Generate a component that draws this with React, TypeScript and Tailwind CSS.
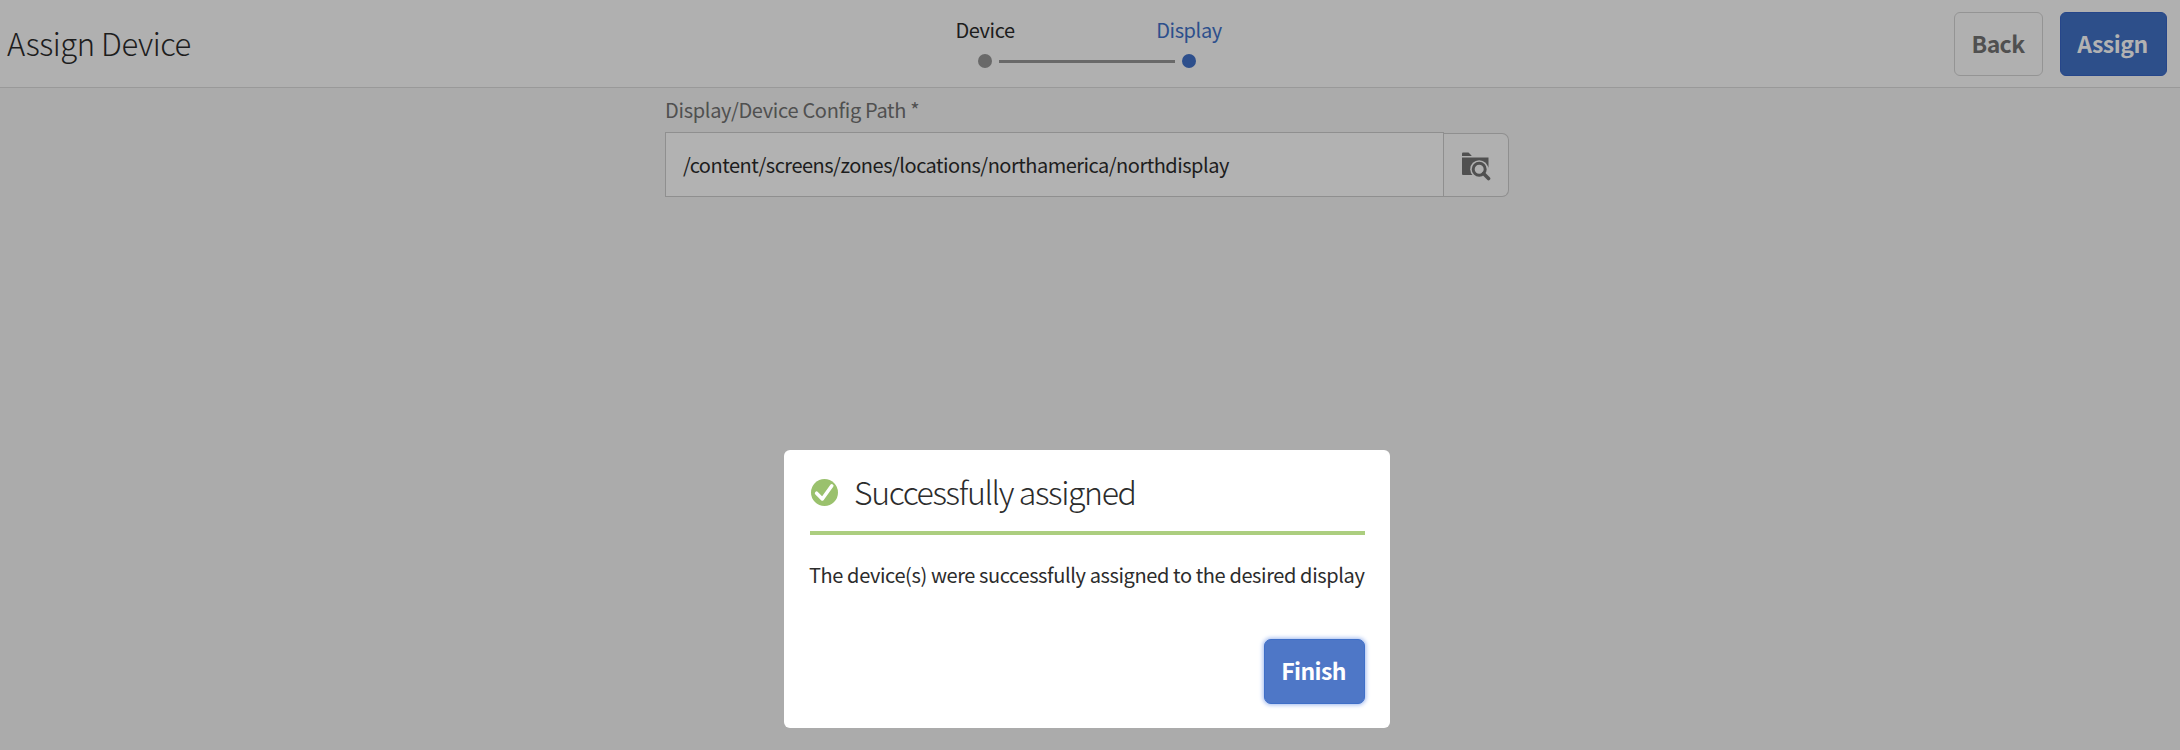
const font = "font-['Noto_Sans_CJK_SC','Noto_Sans',sans-serif]";

function FolderSearch() {
  return (
    <svg width="30" height="30" viewBox="0 0 30 30" fill="none">
      <path d="M1 1.5Q1 .5 2 .5H7.5L10.5 3.5V4H1Z" fill="#505050" />
      <path d="M1 5.5H27.5V23H2Q1 23 1 22Z" fill="#505050" />
      <circle cx="18.2" cy="17.2" r="9" fill="#b0b0b0" />
      <path d="M18 17L29 28V20L27.5 15L24 13Z" fill="#b0b0b0" />
      <circle cx="18.2" cy="17.2" r="6" stroke="#505050" strokeWidth="3" />
      <path d="M22.5 21.5L27.5 26.5" stroke="#505050" strokeWidth="3.6" strokeLinecap="round" />
    </svg>
  );
}

function SuccessIcon() {
  return (
    <svg width="27" height="27" viewBox="0 0 27 27" fill="none">
      <circle cx="13.5" cy="13.5" r="13.5" fill="#9ac16d" />
      <path d="M5.6 14.2L11.3 20L20.8 6.8" stroke="#fff" strokeWidth="3.5" strokeLinecap="round" strokeLinejoin="round" />
    </svg>
  );
}

function Step({ label, active }: { label: string; active?: boolean }) {
  return (
    <div className="flex w-[28px] flex-col items-center">
      <span className={`h-[30px] whitespace-nowrap text-[20px] leading-[30px] tracking-[-0.4px] ${active ? "text-[#2d4f8c]" : "text-[#1d1d1d]"}`}>
        {label}
      </span>
      <span className={`mt-[9px] size-[14px] rounded-full ${active ? "bg-[#2d4f8c]" : "bg-[#696969]"}`} />
    </div>
  );
}

export default function App() {
  return (
    <div className={`${font} flex h-[750px] w-[2180px] flex-col overflow-hidden bg-[#ababab]`}>
      <header className="flex h-[88px] shrink-0 items-start border-b border-[#999999] bg-[#b0b0b0]">
        <h1 className="w-[971px] pl-[7px] pt-[22px] text-[31px] font-light leading-[42px] tracking-[-0.45px] text-[#1d1d1d]">Assign Device</h1>
        <div className="flex pt-[15px]">
          <Step label="Device" />
          <div className="mt-[45px] h-[3px] w-[176px] bg-[#696969]" />
          <Step label="Display" active />
        </div>
        <div className="ml-auto flex gap-[17px] pr-[13px] pt-[12px]">
          <button className="h-[64px] w-[89px] whitespace-nowrap rounded-[6px] border border-[#949494] pb-[2px] pr-[1px] text-[23px] font-bold leading-none tracking-[-0.6px] text-[#505050]">Back</button>
          <button className="h-[64px] w-[107px] whitespace-nowrap rounded-[6px] border border-[#26468a] bg-[#2d4f8a] pb-[2px] pr-[2px] text-[23px] font-bold leading-none tracking-[-0.5px] text-[#b2b2b2]">Assign</button>
        </div>
      </header>
      <main className="flex flex-1 flex-col pl-[665px]">
        <label className="mt-[7px] h-[30px] text-[20px] leading-[30px] tracking-[-0.31px] text-[#505050]">Display/Device Config Path *</label>
        <div className="mt-[7px] flex">
          <div className="flex h-[65px] w-[779px] items-center border border-[#8f8f8f] bg-[#b2b2b2] pl-[17px] pt-[1px] text-[20px] tracking-[-0.5px] text-[#1d1d1d]">
            <span>/content/screens/zones/locations/northamerica/northdisplay</span>
          </div>
          <button className="mt-[1px] flex h-[64px] w-[65px] items-start rounded-r-[7px] border border-l-0 border-[#8f8f8f] bg-[#b0b0b0] pl-[17px] pt-[18px]">
            <FolderSearch />
          </button>
        </div>
        <section className="ml-[119px] mt-[253px] flex h-[278px] w-[606px] flex-col rounded-[6px] bg-white pl-[26px] pr-[25px] pt-[16px] text-[#2c2c2c]">
          <div className="flex h-[69px] shrink-0 items-start border-b-4 border-[#acce7f]">
            <div className="ml-[1px] mt-[13px]"><SuccessIcon /></div>
            <h2 className="ml-[16px] mt-[4px] whitespace-nowrap text-[32px] font-light leading-[42px] tracking-[-1.35px]">Successfully assigned</h2>
          </div>
          <p className="mt-[25px] whitespace-nowrap text-[20px] leading-[30px] tracking-[-0.39px]"><span className="-ml-px">The device(s) were successfully assigned to the desired display</span></p>
          <button className="ml-auto mt-[49px] h-[65px] w-[101px] whitespace-nowrap rounded-[7px] border border-[#3f6fc8] bg-[#4e77c7] pb-[2px] pr-[2px] text-[23px] font-bold leading-none tracking-[-0.6px] text-white shadow-[0_0_4px_1px_#9fb8ee]">Finish</button>
        </section>
      </main>
    </div>
  );
}
